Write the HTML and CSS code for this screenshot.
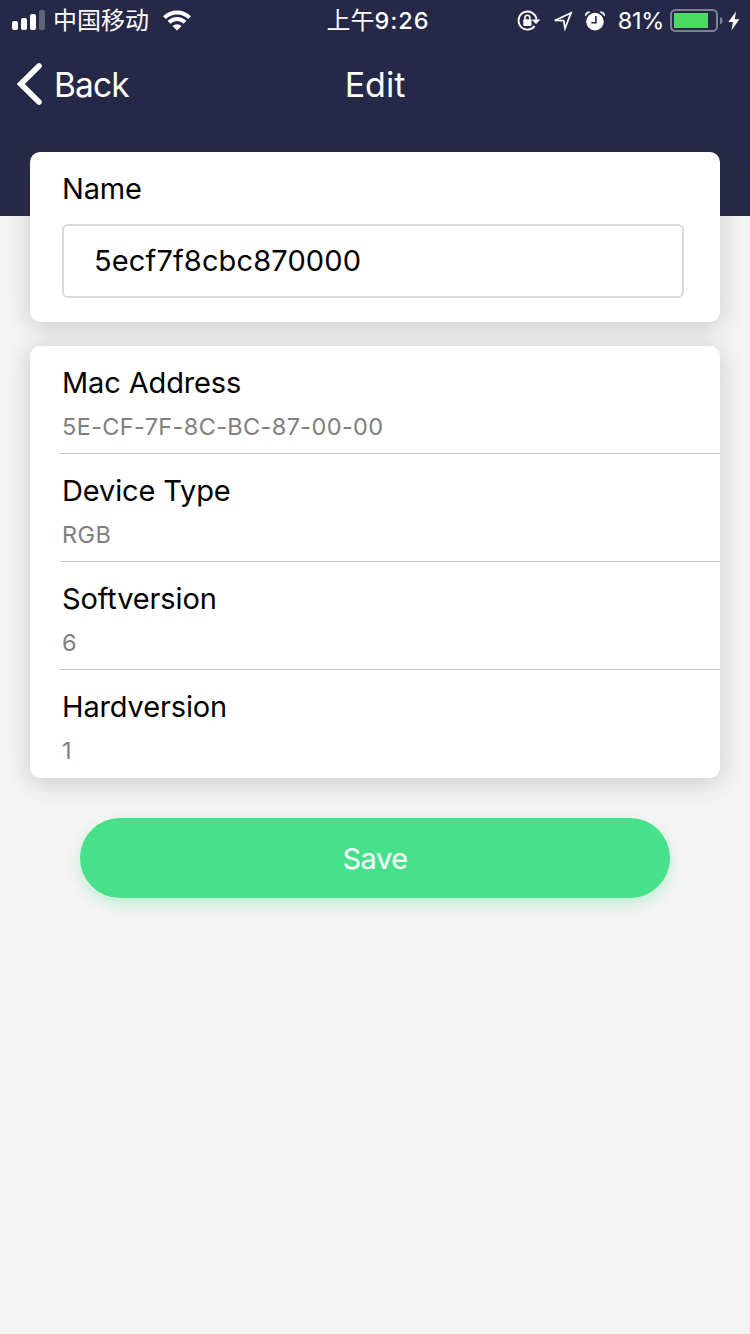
FILE: index.html
```html
<!DOCTYPE html>
<html lang="en">
<head>
<meta charset="utf-8">
<title>Edit</title>
<link rel="stylesheet" href="styles.css">
</head>
<body>
<header class="header">
  <div class="status">
    <div class="status-left">
      <svg class="signal" width="34" height="22" viewBox="0 0 34 22" fill="#fff">
        <rect x="0" y="11" width="6" height="9" rx="2"/>
        <rect x="9" y="8" width="6" height="12" rx="2"/>
        <rect x="18" y="4" width="6" height="16" rx="2"/>
        <rect x="27" y="0" width="6" height="20" rx="2" opacity=".28"/>
      </svg>
      <span class="carrier">中国移动</span>
      <svg class="wifi" width="28" height="22" viewBox="0 0 28 22">
        <g fill="none" stroke="#fff" stroke-width="4">
          <path d="M1.4 7.6a18 18 0 0 1 25.2 0"/>
          <path d="M6 12.2a11.5 11.5 0 0 1 16 0"/>
        </g>
        <path d="M14 20.5l-4.5-4.4a6.4 6.4 0 0 1 9 0z" fill="#fff"/>
      </svg>
    </div>
    <span class="clock">上午<b class="clock-digits">9:26</b></span>
    <div class="status-right">
      <svg width="24" height="22" viewBox="0 0 24 22">
        <path d="M17.600 16.200A9 9 0 1 1 19.500 9.500" fill="none" stroke="#fff" stroke-width="1.900"/>
        <path d="M14.600 9.500h8.800l-4.400 4.600z" fill="#fff"/>
        <rect x="6.300" y="9.300" width="8.200" height="6.700" rx="1" fill="#fff"/>
        <path d="M8 10V7.600a2.400 2.400 0 0 1 4.800 0V10" fill="none" stroke="#fff" stroke-width="1.600"/>
      </svg>
      <svg class="location" width="20" height="20" viewBox="0 0 20 20">
        <path d="M1.800 9.400L18 1.900 12 17.500l-1.300-7.800z" fill="none" stroke="#fff" stroke-width="1.700"/>
      </svg>
      <svg class="alarm" width="20" height="20" viewBox="0 0 20 20">
        <circle cx="10" cy="10.600" r="8.800" fill="#fff"/>
        <path d="M10.900 5v6.700H6.400" fill="none" stroke="#252846" stroke-width="1.600"/>
        <path d="M5.800 1.400A10.200 10.200 0 0 0 1.300 5.800M14.200 1.400a10.200 10.200 0 0 1 4.500 4.400" fill="none" stroke="#252846" stroke-width="1"/>
        <path d="M.4 5.200C-.4 2.200 2 .2 5.200 1A11 11 0 0 0 .4 5.200zM19.600 5.200C20.400 2.200 18 .2 14.800 1a11 11 0 0 1 4.800 4.200z" fill="#fff" stroke="#fff" stroke-width=".5"/>
      </svg>
      <span class="percent">81%</span>
      <svg width="54" height="24" viewBox="0 0 54 24">
        <rect x="1" y="1" width="46" height="21" rx="4.500" fill="none" stroke="#7f8193" stroke-width="2"/>
        <rect x="4" y="4" width="34" height="15" fill="#4cd964"/>
        <path d="M50 8c3.500 1.500 3.500 6 0 7.500z" fill="#7f8193"/>
      </svg>
      <svg class="bolt" width="12" height="20" viewBox="0 0 12 20">
        <path d="M8 .4L.3 11h4.600L3.500 19.500 11.400 8.200H6.800z" fill="#fff"/>
      </svg>
    </div>
  </div>
  <nav class="nav">
    <a class="back">
      <svg width="26" height="44" viewBox="0 0 26 44">
        <path d="M22 4L3.800 22 22 40" fill="none" stroke="#fff" stroke-width="5.600" stroke-linecap="round"/>
      </svg>
      <span class="back-label">Back</span>
    </a>
    <h1 class="title">Edit</h1>
  </nav>
</header>
<main class="content">
  <section class="card name-card">
    <label class="label name-label" for="name">Name</label>
    <input class="name-input" id="name" type="text" value="5ecf7f8cbc870000">
  </section>
  <section class="card details">
    <div class="row"><div class="label">Mac Address</div><div class="value">5E-CF-7F-8C-BC-87-00-00</div></div>
    <div class="row"><div class="label">Device Type</div><div class="value">RGB</div></div>
    <div class="row"><div class="label">Softversion</div><div class="value">6</div></div>
    <div class="row"><div class="label">Hardversion</div><div class="value">1</div></div>
  </section>
  <button class="save" type="button">Save</button>
</main>
</body>
</html>
```
FILE: styles.css
```css
* { box-sizing: border-box; }
body {
  margin: 0;
  min-height: 1334px;
  background: #f4f4f4;
  font-family: Inter, "Noto Sans CJK SC", sans-serif;
  color: #000;
}
svg { display: block; flex: none; }
.header { height: 216px; background: #252846; color: #fff; }
.status {
  height: 40px;
  display: grid;
  grid-template-columns: 1fr auto 1fr;
  align-items: center;
  padding: 2px 10px 0 12px;
  font-size: 24px;
  line-height: 38px;
  white-space: nowrap;
}
.status-left, .status-right { display: flex; align-items: center; }
.status-right { justify-content: flex-end; }
.signal { margin-top: -1px; }
.carrier { margin-left: 7px; font-weight: 400; }
.wifi { margin-left: 14px; margin-top: -1px; }
.clock { padding-left: 4px; }
.clock-digits { font-weight: 500; font-size: 23.5px; letter-spacing: 1px; }
.location { margin-left: 12px; }
.alarm { margin-left: 12px; }
.percent { margin: 0 6px 0 13px; font-size: 23.5px; letter-spacing: -.3px; }
.bolt { margin-left: 4px; }
.nav {
  height: 88px;
  display: grid;
  grid-template-columns: 1fr auto 1fr;
  align-items: center;
  padding: 0 17px;
}
.back { display: flex; align-items: center; gap: 11px; }
.back-label { padding-top: 1px; font-size: 33.5px; letter-spacing: -.9px; }
.title { margin: 0; font-size: 34px; font-weight: 400; }
.content { margin-top: -64px; padding: 0 30px; }
.card {
  background: #fff;
  border-radius: 10px;
  box-shadow: 0 4px 24px rgba(60, 60, 60, .24);
}
.label { display: block; font-size: 29px; line-height: 36px; letter-spacing: -.14px; }
.name-card { height: 170px; padding: 19px 36px 0 32px; margin-bottom: 24px; }
.name-input {
  display: block;
  width: 100%;
  height: 74px;
  margin-top: 17px;
  padding: 0 30px 2px;
  border: 2px solid #dadada;
  border-radius: 6px;
  background: #fff;
  font: 400 29px Inter, sans-serif;
  letter-spacing: .14px;
  color: #000;
  outline: none;
}
.details { padding-left: 30px; }
.row { height: 108px; padding: 19px 0 0 2px; border-bottom: 1px solid #c8c8c8; }
.row:last-child { border-bottom: 0; }
.value { margin-top: 11px; font-size: 23.5px; line-height: 30px; letter-spacing: .36px; color: #808080; }
.save {
  display: block;
  width: 590px;
  height: 80px;
  margin: 40px auto 0;
  padding: 0;
  border: 0;
  border-radius: 40px;
  background: #47e18b;
  color: #fff;
  font: 400 29px Inter, sans-serif;
  letter-spacing: -.5px;
  box-shadow: 0 6px 14px rgba(71, 225, 139, .3);
}
```
